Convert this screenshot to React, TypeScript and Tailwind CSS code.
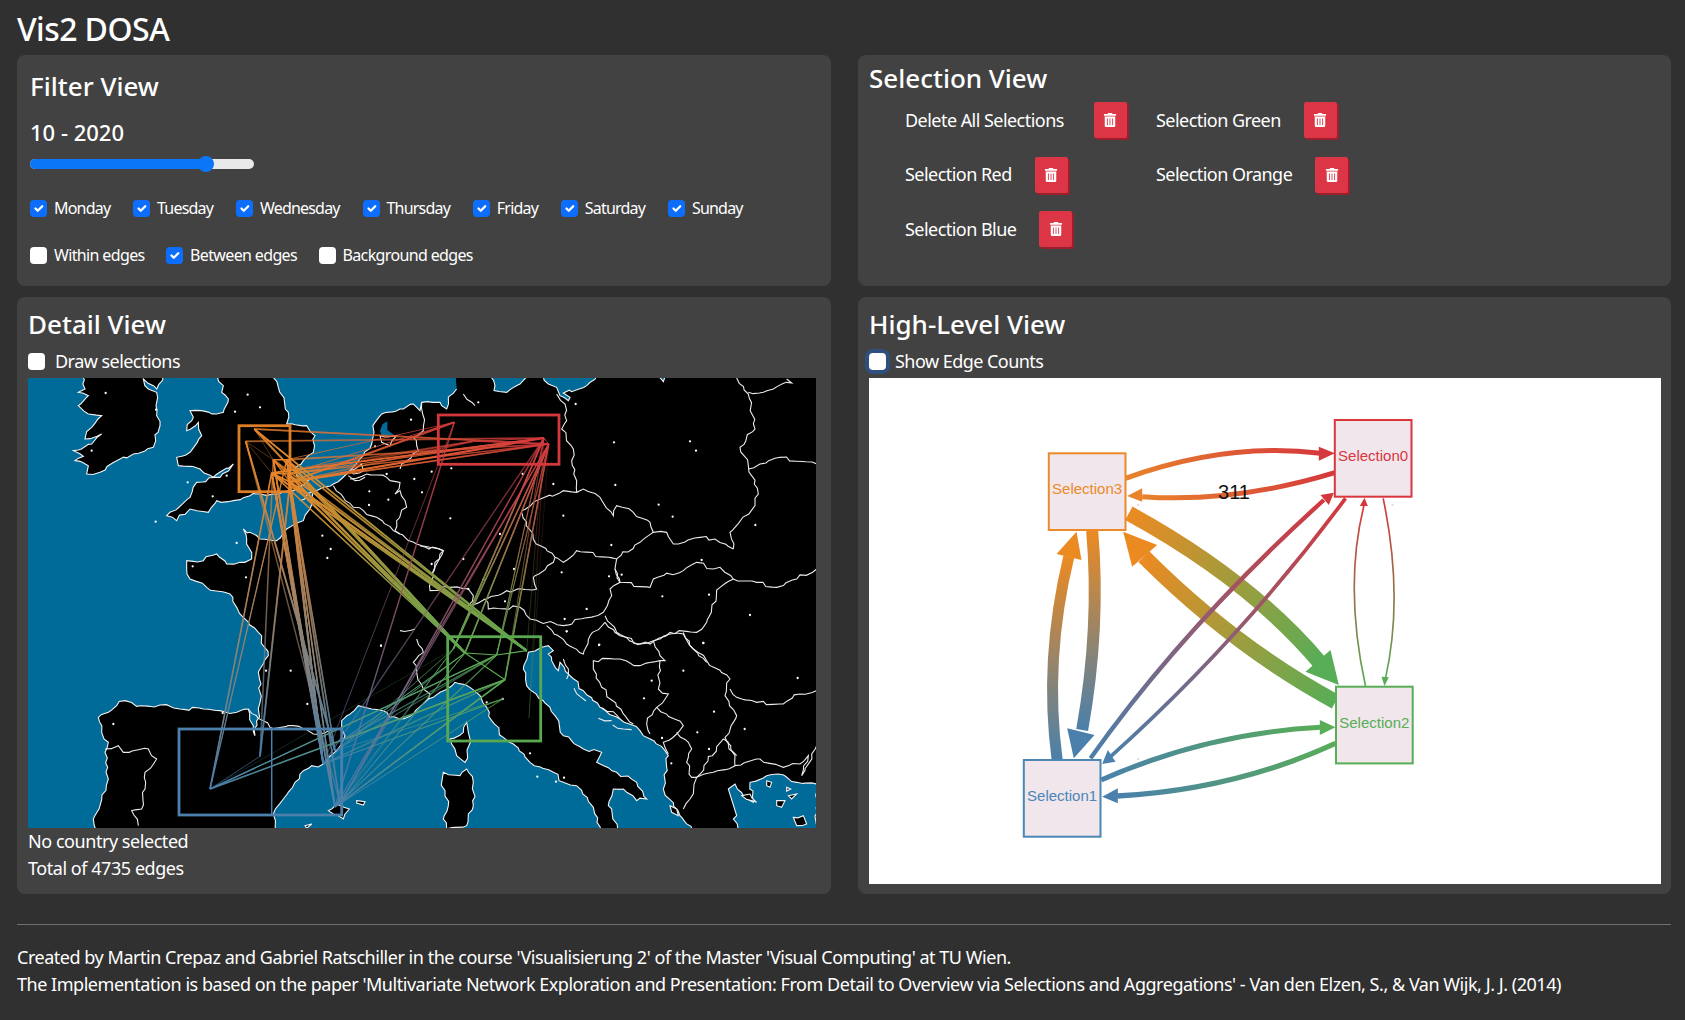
import { FaTrashAlt } from "react-icons/fa";

const FONT = { ui: "font-['Noto_Sans',sans-serif]" };

const DAYS = ["Monday", "Tuesday", "Wednesday", "Thursday", "Friday", "Saturday", "Sunday"];
const EDGE_TYPES = [
  { name: "Within edges", on: false },
  { name: "Between edges", on: true },
  { name: "Background edges", on: false },
];

const RED = "#d5383c";
const ORANGE = "#e8842a";
const GREEN = "#5aa84f";
const BLUE = "#4a80ab";

type P = [number, number];

const ORANGE_PTS: P[] = [[226.3, 51], [217.7, 63.3], [245.3, 81.7], [258.7, 81.7], [243.7, 95], [260, 96], [262, 104]];
const RED_PTS: P[] = [[426.3, 44.3], [444.7, 63.3], [516, 60], [520.7, 66]];
const GREEN_PTS: P[] = [[498.7, 272.7], [468.7, 277], [425.3, 271], [437, 275], [477, 301.7], [474.7, 321], [501, 340.3]];
const BLUE_PTS: P[] = [[182, 411], [232, 378.3], [295.3, 386], [312, 426], [307, 429], [313.7, 362.7], [307, 372.7]];

interface Link { a: P; b: P; ca: string; cb: string; w: number; o: number }

// deterministic bundle of edges between two selections
function bundle(from: P[], to: P[], ca: string, cb: string, fi: number[], ti: number[], n: number, w: number, base = 0.45): Link[] {
  const out: Link[] = [];
  for (let i = 0; i < n; i++) {
    out.push({
      a: from[fi[i % fi.length]],
      b: to[ti[(i * 3 + (i >> 1)) % ti.length]],
      ca,
      cb,
      w: w * (0.6 + ((i * 7) % 5) * 0.25),
      o: base + ((i * 11) % 7) * 0.09,
    });
  }
  return out;
}

const LINKS: Link[] = [
  ...bundle(ORANGE_PTS, RED_PTS, ORANGE, RED, [5, 6, 3, 4, 6, 5, 0, 1], [2, 3, 1, 3, 2, 0], 22, 1.3),
  ...bundle(ORANGE_PTS, GREEN_PTS, ORANGE, GREEN, [6, 5, 3, 6, 4, 5, 6, 2, 0], [0, 1, 2, 3, 4, 5, 6], 48, 1.3),
  ...bundle(ORANGE_PTS, BLUE_PTS, ORANGE, BLUE, [4, 2, 6, 5, 4, 6, 1, 3], [2, 3, 4, 2, 0, 6, 2, 1], 40, 1.2),
  ...bundle(RED_PTS, GREEN_PTS, RED, GREEN, [3, 2, 3], [2, 3, 2, 1, 3, 4], 20, 1),
  ...bundle(RED_PTS, GREEN_PTS, RED, GREEN, [3, 2], [0, 6, 4], 6, 0.6, 0.1),
  ...bundle(RED_PTS, BLUE_PTS, RED, BLUE, [3, 2, 0], [3, 4, 2], 10, 1),
  ...bundle(GREEN_PTS, BLUE_PTS, GREEN, BLUE, [2, 3, 4, 5, 1], [0, 5, 6, 3, 2, 4], 30, 0.9),
];

// Sea shapes traced over the map, coordinates are from the crops (3x)
const ATLANTIC_A =
  "-20,-20 900,-20 900,340 880,365 870,420 850,455 800,480 770,515 720,510 670,480 680,510 695,570 660,580 620,585 590,555 550,575 500,575 500,600 510,630 560,655 630,675 650,715 670,745 715,790 745,860 720,900 720,1000 705,1100 685,1020 650,1030 600,1025 550,1020 480,1020 420,1008 350,1012 315,995 290,1010 235,1045 245,1090 265,1120 255,1150 265,1230 240,1310 220,1350 225,1400 -20,1400";
const NORTH_SEA_E =
  "0,-20 465,-20 470,45 450,65 445,70 440,105 425,95 420,85 365,85 360,110 345,95 340,90 300,105 245,120 225,145 222,175 215,210 190,245 170,268 150,290 140,300 100,330 60,345 0,380";
const IRELAND_A =
  "185,0 195,60 175,70 205,80 175,110 205,135 245,140 215,175 195,210 245,195 215,225 160,245 190,262 165,275 205,290 200,315 240,310 290,275 340,255 400,235 420,170 408,110 410,70 385,60 370,30 410,60 450,0";
const BRITAIN_A =
  "570,0 610,50 605,70 625,90 610,130 590,135 545,125 510,125 520,145 500,185 535,160 545,200 510,250 470,265 475,290 540,300 580,325 640,285 600,325 530,340 510,385 440,440 470,455 510,420 565,430 590,395 640,395 720,375 760,375 820,365 865,335 830,320 825,295 850,275 880,250 885,200 860,170 800,165 805,130 775,55 750,0";
const BALTIC_B = [
  "205,0 225,50 222,65 260,70 300,45 335,0",
  "350,0 385,45 410,55 420,80 445,95 450,85 430,72 500,50 570,0",
  "695,0 730,38 755,0",
];
const MED_F =
  "-70,610 -80,555 -50,510 -15,460 10,425 70,405 110,365 125,345 135,320 125,300 125,275 175,230 215,240 250,245 270,265 300,270 340,255 385,210 420,190 465,160 510,175 540,200 560,235 575,275 610,325 640,345 690,400 760,430 790,460 830,470 880,535 905,610";
const IONIAN_D =
  "600,640 565,560 580,510 610,510 650,545 680,540 650,490 590,460 530,430 545,400 490,390 430,350 405,290 370,245 320,200 310,150 325,100 355,90 385,80 400,95 385,105 415,155 420,130 450,170 490,215 540,265 600,300 660,335 735,395 745,410 730,510 780,590 830,640";
const AEGEAN_D =
  "925,510 945,495 970,530 1000,550 990,490 1040,470 1075,465 1130,490 1190,495 1190,640 960,640 940,600 950,590";
const CORSICA_F = "450,330 490,310 500,280 505,310 510,330 495,400 470,380 455,345";
const SARDINIA_F = "430,430 480,440 500,420 520,460 520,530 500,590 440,600 430,570 445,530 425,460";
const BALEARIC_F = ["85,545 110,525 148,540 130,570 100,555", "170,515 195,518 190,528 170,522", "15,590 35,585 20,598"];
const AEGEAN_ISLES_D = [
  "1040,485 1055,490 1050,505 1040,500",
  "1070,545 1095,545 1085,565 1070,560",
  "1120,595 1150,590 1160,615 1130,620",
  "965,530 1010,550 990,525",
  "750,560 770,570 775,590 755,580",
  "1100,505 1112,510 1100,516",
  "1105,530 1130,525 1115,540",
];
const ADRIATIC_ISLES_D = [
  "430,120 445,150 440,180",
  "462,208 480,232 498,246",
  "535,298 575,305",
  "578,318 610,330 635,332",
  "545,268 580,278 600,300",
];

const BORDERS_E = [
  "100,335 130,370 160,400 190,410 230,430 280,470 300,480 350,510 390,520 430,530 415,560 395,600",
  "150,315 200,300 260,310 300,325 285,360 300,350 320,400 290,440 285,470 300,480",
  "300,285 305,270 355,230 340,190 370,170 368,120 365,85",
  "770,60 795,90 800,140 785,165 820,225 815,260 830,320 830,355",
  "240,185 290,185 270,215 245,205 240,185",
  "150,290 185,270 190,290 160,300 150,290",
  "145,305 165,320 195,310",
  "490,60 525,95",
];
const BORDERS_B = [
  "305,425 340,400 430,365 470,370 490,360 540,385 580,440 590,410 640,430 690,460 700,490 740,490 760,525 840,505 885,510 940,540",
  "950,27 985,75 1005,180 960,235 985,290 1015,375 1005,410 930,490 940,540",
  "985,70 1030,70 1060,60 1100,40 1115,42 1100,30",
  "985,300 1020,285 1080,265 1190,285",
  "305,430 340,510 405,565 430,580 470,545 590,570 660,520 700,490",
  "590,570 585,600 600,640 690,655 700,630 790,605 830,580 880,600 900,595 940,630 900,655 860,760 830,790 750,790 690,825 640,820 590,790 555,740",
  "585,600 600,640 570,660 575,680 550,730 430,770 330,750 300,715 205,720 195,690 145,710 160,680 145,660 90,655 30,665 45,580 70,545 0,530",
  "345,620 340,625 350,660 260,665 200,690",
  "345,620 400,580 405,565",
  "555,760 510,800 490,855 440,825 380,770",
  "555,760 600,800 660,825 700,815 750,795 790,795 820,840 860,880",
  "940,630 1010,640 1070,655 1130,630 1190,600",
];
const BORDERS_D = [
  "700,65 720,110 735,125 720,125 660,140 600,120 520,125 520,150 545,205 610,285 640,315",
  "720,125 715,210 745,225 710,265 680,315 690,345",
  "790,40 820,90 860,125 930,180 915,230 950,290 915,355 945,410 945,440 1020,420 1090,445 1140,435 1165,410 1145,470 1190,380",
  "930,210 950,235 1010,250 1090,255 1140,225 1190,215",
  "710,265 790,320 770,345 730,370 745,405",
  "770,340 805,370 815,390 800,430 815,475 830,475 910,360 950,410",
  "945,440 880,460 830,475 810,540 790,570",
];
const BORDERS_C = [
  "255,390 295,380 310,400 385,390 410,420 375,460 375,510 365,570 335,575 355,620",
  "685,270 750,325 820,320 850,330 880,345 960,330",
];
const BORDERS_F = ["350,30 370,70 340,100 350,130 370,180 390,195 385,210", "300,5 345,0"];

const CITIES_A: P[] = [[257,72],[408,122],[215,245],[683,77],[720,115],[645,128],[620,320],[503,340],[578,382],[407,458],[650,522],[932,540],[907,500],[922,567],[678,625],[518,592],[1083,830],[1048,367],[1105,392],[1047,408],[1183,330],[1100,315],[1173,152],[1065,232],[790,500]];
const CITIES_B: P[] = [[175,100],[467,105],[582,220],[810,217],[828,245],[586,348],[716,407],[758,443],[430,440],[574,528],[1006,468],[425,610],[567,622],[605,617],[845,573],[727,682],[867,677],[990,738],[500,720],[434,750],[440,787],[537,828],[850,822],[255,697],[282,600],[190,632],[130,570],[35,585],[240,495],[91,448],[6,370],[35,308],[94,298],[400,345],[308,315],[145,660],[90,680]];
const CITIES_D: P[] = [[790,155],[695,185],[672,238],[882,278],[1133,177],[974,330],[832,340],[726,357],[867,390],[754,433],[330,403],[200,250],[248,240],[538,77],[850,72],[440,37],[352,473],[408,488],[432,476]];
const CITIES_C: P[] = [[280,315],[738,155],[812,155],[1083,80],[862,255],[608,282]];

const THIRD = 1 / 3;

// breaks long traced segments up so coasts and borders look rough like the geojson ones
function rough(points: string): string {
  const pts = points.split(" ").map((p) => p.split(",").map(Number));
  const out: string[] = [];
  let n = 0;
  pts.forEach((p, i) => {
    out.push(`${p[0]},${p[1]}`);
    const q = pts[i + 1];
    if (!q) return;
    const len = Math.hypot(q[0] - p[0], q[1] - p[1]);
    const steps = Math.floor(len / 14);
    for (let s = 1; s < steps; s++) {
      n++;
      const t = s / steps;
      const dx = ((n * 37) % 11) - 5;
      const dy = ((n * 53) % 11) - 5;
      out.push(`${p[0] + (q[0] - p[0]) * t + dx},${p[1] + (q[1] - p[1]) * t + dy}`);
    }
  });
  return out.join(" ");
}

function Frame({ x, y, children }: { x: number; y: number; children: React.ReactNode }) {
  return <g transform={`translate(${x} ${y}) scale(${THIRD})`}>{children}</g>;
}

function Land({ points }: { points: string }) {
  return <polygon points={rough(points)} fill="#000" stroke="#f4f4f4" strokeWidth={1.1} vectorEffect="non-scaling-stroke" />;
}

function Sea({ points }: { points: string }) {
  return <polygon points={rough(points)} fill="#006b99" stroke="#f4f4f4" strokeWidth={1.1} vectorEffect="non-scaling-stroke" />;
}

// open coast: the sea is filled, only the points from `from` on get a shoreline
function Coast({ points, from }: { points: string; from: number }) {
  const rest = points.split(" ").slice(0, from);
  const shore = rough(points.split(" ").slice(from).join(" "));
  return (
    <>
      <polygon points={`${rest.join(" ")} ${shore}`} fill="#006b99" />
      <polyline points={shore} fill="none" stroke="#f4f4f4" strokeWidth={1.1} vectorEffect="non-scaling-stroke" />
    </>
  );
}

function Borders({ lines }: { lines: string[] }) {
  return (
    <>
      {lines.map((l) => (
        <polyline key={l} points={rough(l)} fill="none" stroke="#ececec" strokeWidth={1.1} vectorEffect="non-scaling-stroke" />
      ))}
    </>
  );
}

function Cities({ pts }: { pts: P[] }) {
  return (
    <>
      {pts.map(([x, y]) => (
        <circle key={`${x}-${y}`} cx={x} cy={y} r={3.4} fill="#fff" />
      ))}
    </>
  );
}

function GeoMap() {
  return (
    <svg viewBox="0 0 788 450" className="block h-[450px] w-[788px]">
      <defs>
        {LINKS.map((l, i) => (
          <linearGradient key={i} id={`m${i}`} gradientUnits="userSpaceOnUse" x1={l.a[0]} y1={l.a[1]} x2={l.b[0]} y2={l.b[1]}>
            <stop offset="0" stopColor={l.ca} />
            <stop offset="1" stopColor={l.cb} />
          </linearGradient>
        ))}
      </defs>
      <rect width="788" height="450" fill="#000" />
      <Frame x={-8} y={-9}>
        <Coast points={ATLANTIC_A} from={3} />
      </Frame>
      <Frame x={272} y={-4}>
        <Coast points={NORTH_SEA_E} from={2} />
        <polygon points="248,150 262,142 262,168 285,185 245,185 240,170" fill="#006b99" />
      </Frame>
      <Frame x={392} y={-9}>
        {BALTIC_B.map((p) => (
          <Sea key={p} points={p} />
        ))}
      </Frame>
      <Frame x={272} y={251}>
        <Sea points={MED_F} />
        <Land points={CORSICA_F} />
        <Land points={SARDINIA_F} />
        {BALEARIC_F.map((p) => (
          <Land key={p} points={p} />
        ))}
      </Frame>
      <Frame x={392} y={241}>
        <Sea points={IONIAN_D} />
        <Sea points={AEGEAN_D} />
        {AEGEAN_ISLES_D.map((p) => (
          <Land key={p} points={p} />
        ))}
        <Borders lines={ADRIATIC_ISLES_D} />
      </Frame>
      <Frame x={-8} y={-9}>
        <Land points={IRELAND_A} />
        <Land points={BRITAIN_A} />
        <Cities pts={CITIES_A} />
      </Frame>
      <Frame x={272} y={-4}>
        <Borders lines={BORDERS_E} />
      </Frame>
      <Frame x={392} y={-9}>
        <Borders lines={BORDERS_B} />
        <Cities pts={CITIES_B} />
      </Frame>
      <Frame x={392} y={241}>
        <Borders lines={BORDERS_D} />
        <Cities pts={CITIES_D} />
      </Frame>
      <Frame x={-8} y={241}>
        <Borders lines={BORDERS_C} />
        <Cities pts={CITIES_C} />
      </Frame>
      <Frame x={272} y={251}>
        <Borders lines={BORDERS_F} />
      </Frame>

      {/* edges between selections */}
      {LINKS.map((l, i) => (
        <line key={i} x1={l.a[0]} y1={l.a[1]} x2={l.b[0]} y2={l.b[1]} stroke={`url(#m${i})`} strokeWidth={l.w} strokeOpacity={l.o} />
      ))}
      <polyline points="245.3,81.7 258.7,81.7 262,104 243.7,95 258.7,96" fill="none" stroke={ORANGE} strokeWidth={1.6} />
      <polyline points="245.3,81.7 262,104" fill="none" stroke={ORANGE} strokeWidth={1.2} />
      <polyline points="226.3,51 245.3,81.7 217.7,63.3 243.7,95" fill="none" stroke={ORANGE} strokeWidth={0.6} strokeOpacity={0.6} />
      <polyline points="477,301.7 437,275 468.7,277 498.7,272.7" fill="none" stroke={GREEN} strokeWidth={1.2} />
      <polyline points="516,60 520.7,66 444.7,63.3 516,60" fill="none" stroke={RED} strokeWidth={0.8} />
      <polyline points="182,411 232,378.3" fill="none" stroke={BLUE} strokeWidth={0.6} />

      {/* selection rectangles */}
      <rect x={211} y={47.7} width={51} height={66} fill="none" stroke={ORANGE} strokeWidth={2.8} strokeOpacity={0.95} />
      <rect x={410.3} y={37} width={120.7} height={49.3} fill="none" stroke={RED} strokeWidth={2.8} />
      <rect x={419.7} y={258.7} width={93} height={104.3} fill="none" stroke={GREEN} strokeWidth={2.8} />
      <rect x={151} y={351} width={162.7} height={86} fill="none" stroke={BLUE} strokeWidth={2.8} />
      <line x1={243.7} y1={351} x2={243.7} y2={437} stroke={BLUE} strokeWidth={1.5} />
    </svg>
  );
}

interface GraphEdge { d: string; w: number; from: string; to: string; head: string; g: [number, number, number, number] }

const GRAPH_EDGES: GraphEdge[] = [
  { d: "M375,235 Q680,125 960,160", w: 15, from: ORANGE, to: RED, head: "955,140 1003,160 955,182", g: [375, 235, 960, 160] },
  { d: "M1003,218 Q700,310 425,290", w: 15, from: RED, to: ORANGE, head: "425,265 380,288 425,305", g: [1003, 218, 425, 290] },
  { d: "M170,1080 Q130,780 205,470", w: 33, from: BLUE, to: "#ec8a22", head: "168,462 228,395 243,480", g: [170, 1080, 205, 470] },
  { d: "M275,392 Q300,680 245,990", w: 36, from: "#ec8a22", to: BLUE, head: "200,985 220,1075 282,1005", g: [275, 392, 245, 990] },
  { d: "M385,340 Q750,540 960,790", w: 46, from: "#ec8a22", to: "#58ad57", head: "915,815 990,750 1015,855", g: [385, 340, 960, 790] },
  { d: "M1005,905 Q700,740 430,470", w: 46, from: "#58ad57", to: "#ec8a22", head: "395,500 368,395 470,435", g: [1005, 905, 430, 470] },
  { d: "M270,1075 Q550,680 970,300", w: 13, from: BLUE, to: RED, head: "960,285 1000,278 985,315", g: [270, 1075, 970, 300] },
  { d: "M1035,295 Q720,720 330,1070", w: 11, from: RED, to: BLUE, head: "305,1092 322,1050 345,1085", g: [1035, 295, 330, 1070] },
  { d: "M1095,858 Q1030,560 1090,318", w: 5, from: "#58ad57", to: RED, head: "1078,318 1092,293 1102,318", g: [1095, 858, 1090, 318] },
  { d: "M1148,295 Q1210,590 1155,835", w: 5, from: RED, to: "#58ad57", head: "1143,830 1152,858 1165,832", g: [1148, 295, 1155, 835] },
  { d: "M302,1140 Q620,1000 960,982", w: 15, from: BLUE, to: "#58ad57", head: "958,960 1005,982 958,1005", g: [302, 1140, 960, 982] },
  { d: "M1005,1030 Q700,1170 350,1188", w: 16, from: "#58ad57", to: BLUE, head: "352,1165 305,1190 352,1210", g: [1005, 1030, 350, 1188] },
];

const NODES = [
  { x: 465.8, y: 42, name: "Selection0", c: "#d9363e" },
  { x: 154.8, y: 382, name: "Selection1", c: "#4a87b5" },
  { x: 467, y: 308.7, name: "Selection2", c: "#58ad57" },
  { x: 179.8, y: 75.3, name: "Selection3", c: "#ec8a2a" },
];

function HighLevelGraph() {
  return (
    <svg viewBox="0 0 792 506" className="block h-[506px] w-[792px] bg-white font-['Liberation_Sans',sans-serif]">
      <defs>
        {GRAPH_EDGES.map((e, i) => (
          <linearGradient key={i} id={`g${i}`} gradientUnits="userSpaceOnUse" x1={e.g[0]} y1={e.g[1]} x2={e.g[2]} y2={e.g[3]}>
            <stop offset="0" stopColor={e.from} />
            <stop offset="1" stopColor={e.to} />
          </linearGradient>
        ))}
      </defs>
      <Frame x={131.5} y={22}>
        {GRAPH_EDGES.map((e, i) => (
          <g key={i}>
            <path d={e.d} fill="none" stroke={`url(#g${i})`} strokeWidth={e.w} />
            <polygon points={e.head} fill={e.to} />
          </g>
        ))}
        <rect x={410} y={312} width={6} height={6} fill="#ddd" />
        <rect x={1173} y={312} width={6} height={6} fill="#ddd" />
        <rect x={410} y={1074} width={6} height={6} fill="#ddd" />
      </Frame>
      {NODES.map((n) => (
        <g key={n.name}>
          <rect x={n.x} y={n.y} width={76.7} height={76.7} fill="#f0e6ec" stroke={n.c} strokeWidth={2} />
          <text x={n.x + 38.3} y={n.y + 41} textAnchor="middle" fontSize={15} fill={n.c}>
            {n.name}
          </text>
        </g>
      ))}
      <text x={365} y={121} textAnchor="middle" fontSize={20} fill="#111">
        311
      </text>
    </svg>
  );
}

function Check({ checked, label, focus, gap }: { checked: boolean; label: string; focus?: boolean; gap?: string }) {
  return (
    <label className={`flex items-center ${gap ?? "gap-[7px]"}`}>
      <span
        className={`flex h-[17px] w-[17px] items-center justify-center rounded-[4px] ${checked ? "bg-[#0d6efd]" : "bg-white"} ${
          focus ? "ring-4 ring-[#2f4f7f]" : ""
        }`}
      >
        {checked && (
          <svg viewBox="0 0 20 20" className="h-[15px] w-[15px]">
            <path d="M6 10l3 3 6-6" fill="none" stroke="#fff" strokeWidth={3} strokeLinecap="round" strokeLinejoin="round" />
          </svg>
        )}
      </span>
      {label}
    </label>
  );
}

function Trash({ name, gap }: { name: string; gap?: string }) {
  return (
    <div className={`flex items-center ${gap ?? "gap-[23px]"}`}>
      <span className="text-[18px] leading-[27px] tracking-[-0.03em] text-white">{name}</span>
      <button className="flex h-9 w-[33px] items-center justify-center rounded-[2px] bg-[#dc3545] text-white shadow-[2px_2px_0_#9c1f2d]">
        <FaTrashAlt size={14} />
      </button>
    </div>
  );
}

export default function App() {
  return (
    <div className={`min-h-[1020px] bg-[#303030] pl-[17px] pr-[14px] text-white ${FONT.ui}`}>
      <h1 className="flex h-[55px] items-center pt-[3px] text-[32px] font-medium tracking-[-0.018em]">Vis2 DOSA</h1>

      <div className="grid grid-cols-[814px_813px] gap-x-[27px] gap-y-[11px]">
        {/* Filter */}
        <section className="h-[231px] rounded-lg bg-[#424242] pl-[13px] pr-[14px] pt-[12px]">
          <h2 className="text-[26px] font-medium leading-[39px]">Filter View</h2>
          <div className="mt-[10px] text-[22px] font-medium leading-[33px]">10 - 2020</div>
          <div className="relative mt-[10px] h-[10px] w-[224px] rounded-full bg-[#e9e9e9]">
            <div className="h-[10px] w-[176px] rounded-full bg-[#0b76f7]" />
            <div className="absolute left-[168px] top-[-3px] h-4 w-4 rounded-full bg-[#0b76f7]" />
          </div>
          <div className="mt-[27px] flex gap-[22.8px] text-[16px] leading-[24px] tracking-[-0.05em]">
            {DAYS.map((d) => (
              <Check key={d} checked label={d} />
            ))}
          </div>
          <div className="mt-[23px] flex gap-[21.5px] text-[16px] leading-[24px] tracking-[-0.04em]">
            {EDGE_TYPES.map((e) => (
              <Check key={e.name} checked={e.on} label={e.name} />
            ))}
          </div>
        </section>

        {/* Selections */}
        <section className="h-[231px] rounded-lg bg-[#424242] pl-[11px] pt-[4px]">
          <h2 className="text-[26px] font-medium leading-[39px]">Selection View</h2>
          <div className="ml-[36px] mt-[4px] grid grid-cols-[251px_1fr] gap-y-[18.5px]">
            <Trash name="Delete All Selections" gap="gap-[30px]" />
            <Trash name="Selection Green" />
            <Trash name="Selection Red" />
            <Trash name="Selection Orange" />
            <Trash name="Selection Blue" />
          </div>
        </section>

        {/* Detail */}
        <section className="h-[597px] rounded-lg bg-[#424242] pl-[11px] pt-[8px]">
          <h2 className="text-[26px] font-medium leading-[39px]">Detail View</h2>
          <div className="flex h-[34px] items-center pt-[1px] text-[18px] tracking-[-0.03em]">
            <Check checked={false} label="Draw selections" gap="gap-[10px]" />
          </div>
          <GeoMap />
          <p className="text-[18px] leading-[27px] tracking-[-0.025em]">No country selected</p>
          <p className="text-[18px] leading-[27px] tracking-[-0.025em]">Total of 4735 edges</p>
        </section>

        {/* High level */}
        <section className="h-[597px] rounded-lg bg-[#424242] pl-[11px] pt-[8px]">
          <h2 className="text-[26px] font-medium leading-[39px]">High-Level View</h2>
          <div className="flex h-[34px] items-center pt-[1px] text-[18px] tracking-[-0.03em]">
            <Check checked={false} label="Show Edge Counts" focus gap="gap-[9px]" />
          </div>
          <HighLevelGraph />
        </section>
      </div>

      <hr className="mt-[30px] border-[#707070]" />
      <footer className="pt-[19px] text-[18px] leading-[27px] tracking-[-0.026em]">
        <p>Created by Martin Crepaz and Gabriel Ratschiller in the course 'Visualisierung 2' of the Master 'Visual Computing' at TU Wien.</p>
        <p>
          The Implementation is based on the paper 'Multivariate Network Exploration and Presentation: From Detail to Overview via Selections and
          Aggregations' - Van den Elzen, S., &amp; Van Wijk, J. J. (2014)
        </p>
      </footer>
    </div>
  );
}
